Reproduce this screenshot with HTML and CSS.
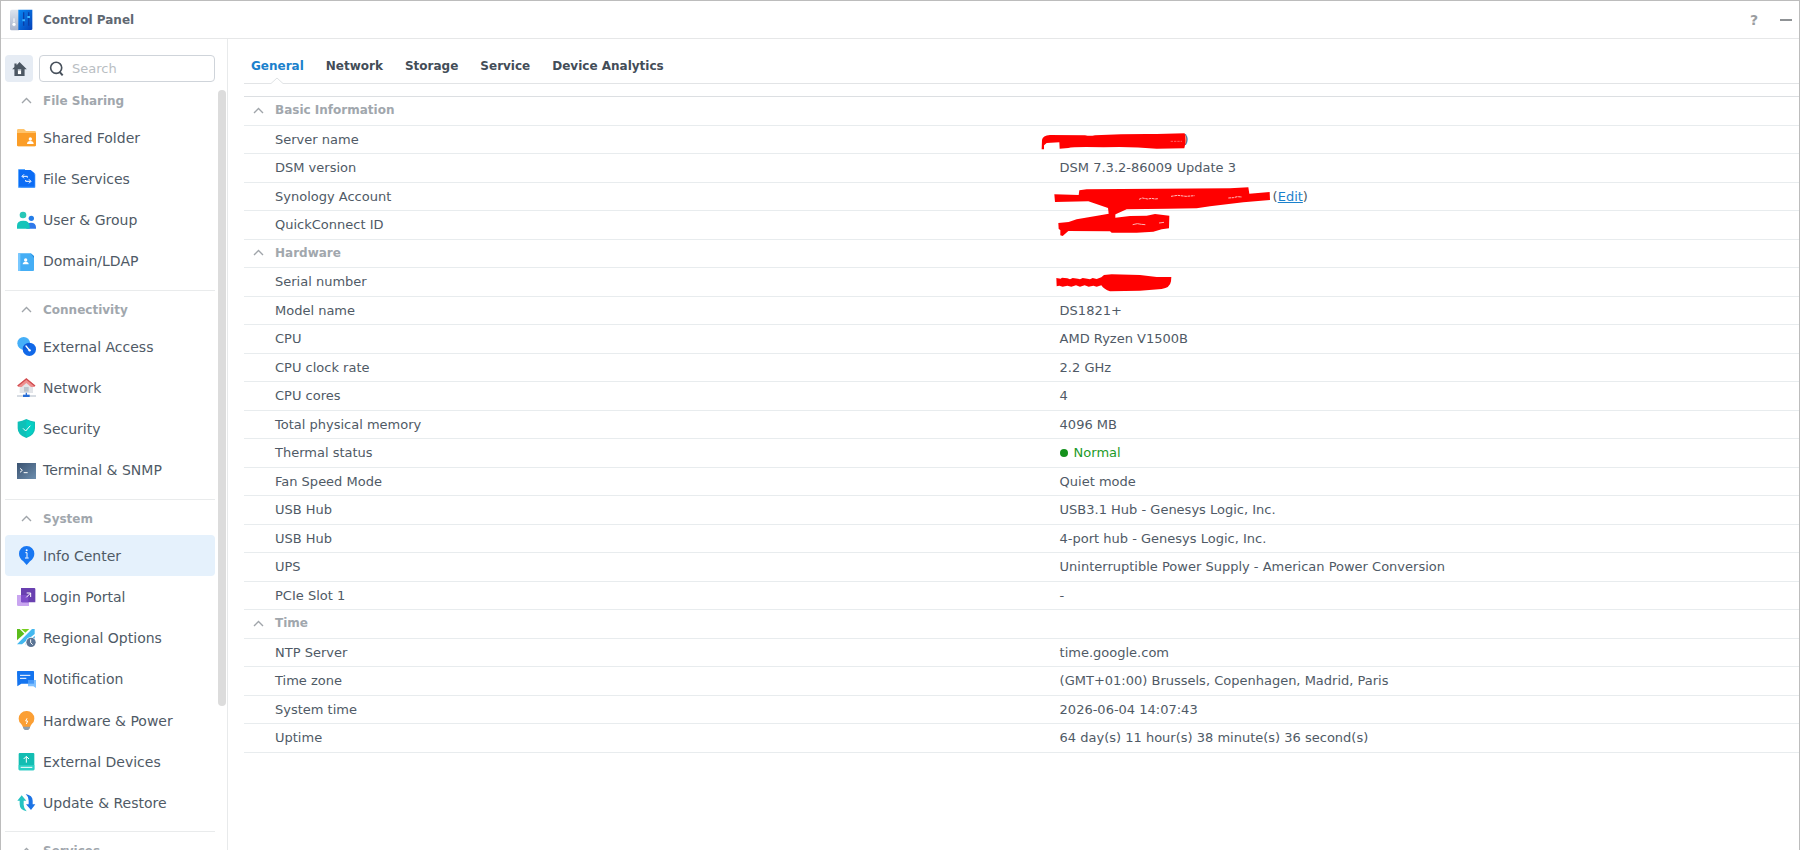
FILE: index.html
```html
<!DOCTYPE html>
<html lang="en">
<head>
<meta charset="utf-8">
<title>Control Panel</title>
<link rel="stylesheet" href="styles.css">
</head>
<body>
<div class="window">
  <header class="titlebar">
    <svg class="app-icon" viewBox="0 0 72 66" aria-hidden="true">
      <defs>
        <linearGradient id="gPanel" x1="0" y1="0" x2="1" y2="1"><stop offset="0" stop-color="#0a8af5"/><stop offset="1" stop-color="#0440b8"/></linearGradient>
        <linearGradient id="gSide" x1="0" y1="0" x2="0" y2="1"><stop offset="0" stop-color="#dde4ee"/><stop offset="1" stop-color="#a9b4cc"/></linearGradient>
      </defs>
      <path d="M8 2h22v62H8q-5 0-5-5V8q0-6 5-6z" fill="url(#gSide)"/>
      <path d="M15 28v14" stroke="#fff" stroke-width="3"/>
      <circle cx="15" cy="46" r="6" fill="#fff" stroke="#b6bfd2" stroke-width="2"/>
      <path d="M28 2h42v58q0 3-4 3H28z" fill="url(#gPanel)"/>
      <path d="M44 10v40M59 10v40" stroke="#0a3fa8" stroke-width="4"/>
      <path d="M40 34h8M55 24h8" stroke="#39b4ff" stroke-width="6"/>
    </svg>
    <h1 class="title">Control Panel</h1>
    <div class="window-tools">
      <button class="tool" type="button" aria-label="Help">?</button>
      <button class="tool" type="button" aria-label="Minimize"><svg class="minus" viewBox="0 0 12 2"><path d="M0 1h12" stroke="#8f9295" stroke-width="2"/></svg></button>
    </div>
  </header>
  <div class="body">
    <aside class="sidebar">
      <div class="search-row">
        <button class="home" type="button" aria-label="Home">
          <svg class="home-icon" viewBox="0 0 46 44"><path d="M23 0L46 23H39V44H7V23H0L7 16V5h7v5z" fill="#4c5763"/><path d="M18 22h10v16H18z" fill="#fff"/><path d="M18 22h10v5H18z" fill="#aab3be"/></svg>
        </button>
        <label class="search">
          <svg class="search-icon" viewBox="0 0 44 46" aria-hidden="true"><circle cx="21" cy="21" r="17" fill="none" stroke="#47505b" stroke-width="5"/><path d="M31 33l10 11" stroke="#47505b" stroke-width="6"/></svg>
          <input class="search-input" type="search" placeholder="Search" aria-label="Search">
        </label>
      </div>
      <div class="nav-area">
        <nav class="nav">
          <section class="group">
            <button class="group-title" type="button"><svg class="chevron" viewBox="0 0 11 7"><path d="M1 6l4.500-4.500L10 6"/></svg>File Sharing</button>
            <a class="item" href="#"><svg class="icon" viewBox="0 0 57 57"><path d="M0 7q0-4 4-4h17l6 6h26q4 0 4 4v38q0 4-4 4H4q-4 0-4-4z" fill="#ffc36a"/><path d="M0 15h57v36q0 4-4 4H4q-4 0-4-4z" fill="#fb9d27"/><circle cx="40" cy="33" r="5" fill="#fff"/><path d="M30 48q0-9 10-9t10 9z" fill="#fff"/></svg>Shared Folder</a>
            <a class="item" href="#"><svg class="icon" viewBox="0 0 57 57"><path d="M3 3q0-3 3-3h18v57H6q-3 0-3-3z" fill="#5aa7ff"/><path d="M9 57h43q3 0 3-3V14" fill="#4c9cff"/><path d="M6 3h35l12 10v40H6z" fill="#0b6cf5"/><path d="M21 16l-6 6 6 6M16 22h15v4M36 31l6 6-6 6M41 37H26v-4" fill="none" stroke="#fff" stroke-width="3"/></svg>File Services</a>
            <a class="item" href="#"><svg class="icon" viewBox="0 0 57 57"><circle cx="18" cy="15" r="10" fill="#27c7b7"/><circle cx="43" cy="25" r="8" fill="#247de8"/><path d="M28 56V48q2-10 14-10 15 0 15 14v4z" fill="#2f78ea"/><path d="M0 56v-9q0-15 19-15t19 17v7z" fill="#16c4ba"/></svg>User &amp; Group</a>
            <a class="item" href="#"><svg class="icon" viewBox="0 0 57 57"><path d="M6 4h36l9 8v42q0 3-3 3H6q-3 0-3-3V7q0-3 3-3z" fill="#45aef5"/><path d="M3 4h7v53H3z" fill="#79c8ff"/><path d="M40 4l11 9v5z" fill="#2388dd"/><circle cx="26" cy="24" r="5" fill="#fff"/><path d="M17 37q0-8 9-8t9 8z" fill="#fff"/></svg>Domain/LDAP</a>
          </section>
          <section class="group">
            <button class="group-title" type="button"><svg class="chevron" viewBox="0 0 11 7"><path d="M1 6l4.500-4.500L10 6"/></svg>Connectivity</button>
            <a class="item" href="#"><svg class="icon" viewBox="0 0 57 57"><circle cx="20" cy="19" r="19" fill="#45aff8"/><circle cx="37" cy="37" r="20" fill="#1168e8"/><path d="M18 37q0-17 20-19 3 11-5 17-6 4-15 2z" fill="#0d5ad6"/><path d="M27 27l10 12" stroke="#fff" stroke-width="4" stroke-linecap="round"/><circle cx="38" cy="40" r="3.500" fill="#fff"/></svg>External Access</a>
            <a class="item" href="#"><svg class="icon" viewBox="0 0 57 57"><path d="M8 22h40v23H8z" fill="#e2e4e8"/><path d="M21 26h14v15H21z" fill="#bcc4cc"/><path d="M28 0l27 23-4 4H5l-4-4z" fill="#ee8f8f"/><path d="M14 27L28 15l14 12z" fill="#e2e4e8"/><path d="M2 24L28 3l26 21" fill="none" stroke="#cf4c50" stroke-width="4"/><path d="M0 54h57" stroke="#aeb9c6" stroke-width="3"/><path d="M28 44v8" stroke="#2f72d8" stroke-width="4"/><path d="M18 50h20v7H18z" fill="#256cd6"/></svg>Network</a>
            <a class="item" href="#"><svg class="icon" viewBox="0 0 57 57"><path d="M28 0Q40 7 54 8v20q0 21-26 29Q2 49 2 28V8Q16 7 28 0z" fill="#0fc0b8"/><path d="M28 4Q39 10 50 11v17q0 18-22 25z" fill="#05cfc4"/><path d="M18 28l8 8 14-16" fill="none" stroke="#fff" stroke-width="3"/></svg>Security</a>
            <a class="item" href="#"><svg class="icon" viewBox="0 0 57 57"><defs><linearGradient id="gTerm" x1="0" y1="0" x2="1" y2="1"><stop offset="0" stop-color="#3a5270"/><stop offset="1" stop-color="#6d8eae"/></linearGradient></defs><path d="M0 6h57v48H0z" fill="url(#gTerm)"/><path d="M9 22l7 6-7 6M20 35h12" fill="none" stroke="#fff" stroke-width="3"/></svg>Terminal &amp; SNMP</a>
          </section>
          <section class="group">
            <button class="group-title" type="button"><svg class="chevron" viewBox="0 0 11 7"><path d="M1 6l4.500-4.500L10 6"/></svg>System</button>
            <a class="item active" href="#" aria-current="page"><svg class="icon" viewBox="0 0 57 57"><path d="M29 0a23 23 0 0 1 23 23Q52 36 39 46L29 57 19 46Q6 36 6 23A23 23 0 0 1 29 0z" fill="#1877f2"/><circle cx="29" cy="13" r="3" fill="#fff"/><path d="M25 20h5v15M24 36h11" fill="none" stroke="#fff" stroke-width="3"/></svg>Info Center</a>
            <a class="item" href="#"><svg class="icon" viewBox="0 0 57 57"><path d="M0 24h36v33H4q-4 0-4-4z" fill="#c9a5f0"/><path d="M12 3h40q3 0 3 3v40H15q-3 0-3-3z" fill="#6940b0"/><path d="M12 24h22v22H15q-3 0-3-3z" fill="#7e4cc9"/><path d="M28 31l12-12M29 18h12v12" fill="none" stroke="#fff" stroke-width="3"/></svg>Login Portal</a>
            <a class="item" href="#"><svg class="icon" viewBox="0 0 57 57"><path d="M0 3h53v46H0z" fill="#fff"/><path d="M0 3h8l14 14L0 37z" fill="#5cbd1c"/><path d="M13 3h24L25 14z" fill="#76cf20"/><path d="M45 3h8v15L15 49H0z" fill="#43b8ef"/><path d="M53 24v25H24z" fill="#2aa0dd"/><circle cx="42" cy="43" r="16" fill="#fff"/><circle cx="42" cy="43" r="14" fill="#5b7494"/><path d="M41 34v10l6 6" fill="none" stroke="#fff" stroke-width="3"/></svg>Regional Options</a>
            <a class="item" href="#"><svg class="icon" viewBox="0 0 57 57"><path d="M2 3h47q2 0 2 2v36H13L1 49 0 5q0-2 2-2z" fill="#1474ef"/><path d="M33 30h24v24l-8-5H33z" fill="#7fc0ff"/><path d="M33 30h18v11H33z" fill="#4698f8"/><path d="M9 16h31M9 25h19" stroke="#fff" stroke-width="3"/></svg>Notification</a>
            <a class="item" href="#"><svg class="icon" viewBox="0 0 57 57"><path d="M18 42h21v9l-5 6H23l-5-6z" fill="#8f9eac"/><path d="M28 0a23 23 0 0 1 24 23q0 9-7 15-4 4-5 9H17q-1-5-5-9-7-6-7-15A23 23 0 0 1 28 0z" fill="#fb9f34"/><path d="M30 22l-4 8h6l-4 9" fill="none" stroke="#fff" stroke-width="3"/></svg>Hardware &amp; Power</a>
            <a class="item" href="#"><svg class="icon" viewBox="0 0 57 57"><path d="M8 3h41q3 0 3 3v46q0 3-3 3H8q-3 0-3-3V6q0-3 3-3z" fill="#13bdb2"/><path d="M5 39h47v13q0 3-3 3H8q-3 0-3-3z" fill="#29d0c5"/><path d="M28 32V14M20 21l8-8 8 8M11 46h35" fill="none" stroke="#fff" stroke-width="3"/></svg>External Devices</a>
            <a class="item" href="#"><svg class="icon" viewBox="0 0 57 57"><path d="M14 7L28 23H20v12q0 11 9 20Q8 51 8 34V23H1z" fill="#25c3c2"/><path d="M42 51L27 34h8V23q0-12-9-20 21 4 21 20v11h8z" fill="#1c73e5"/></svg>Update &amp; Restore</a>
          </section>
          <section class="group">
            <button class="group-title" type="button"><svg class="chevron" viewBox="0 0 11 7"><path d="M1 6l4.500-4.500L10 6"/></svg>Services</button>
          </section>
        </nav>
        <div class="scroll-track"><div class="scroll-thumb"></div></div>
      </div>
    </aside>
    <main class="content">
      <nav class="tabs">
        <a class="tab current" href="#" aria-current="page">General<svg class="notch" viewBox="0 0 12 7"><path d="M0 6L6 1l6 5v1H0z" fill="#fff"/><path d="M0 6.500L6 1l6 5.500" fill="none" stroke="#dfe2e4"/></svg></a>
        <a class="tab" href="#">Network</a>
        <a class="tab" href="#">Storage</a>
        <a class="tab" href="#">Service</a>
        <a class="tab" href="#">Device Analytics</a>
      </nav>
      <table class="info">
        <colgroup><col class="col-label"><col></colgroup>
        <tbody>
          <tr class="section-row"><th colspan="2" scope="colgroup"><button class="section-title" type="button"><svg class="chevron" viewBox="0 0 11 7"><path d="M1 6l4.500-4.500L10 6"/></svg>Basic Information</button></th></tr>
          <tr><th scope="row">Server name</th><td><span class="hidden-name"></span>)<svg class="mark" viewBox="30 18 900 180"><path d="M35 88L36 60Q38 46 60 45L165 46Q180 49 195 46 290 41 380 42L464 40Q470 62 463 85L380 86Q300 79 220 82 130 80 115 84L89 86 88 67 50 69 42 76 42 88z" fill="#f00"/><path d="M422 64h34" stroke="#ff8f8f" stroke-width="2" stroke-dasharray="7 3"/></svg></td></tr>
          <tr><th scope="row">DSM version</th><td>DSM 7.3.2-86009 Update 3</td></tr>
          <tr><th scope="row">Synology Account</th><td><span class="hidden-account"></span>(<a class="link" href="#">Edit</a>)<svg class="mark" viewBox="30 189 900 180"><path d="M73 223L146 225 148 211 170 208 380 206 600 205 655 202 658 221 719 216 720 240 640 247 540 259 500 265 410 266 290 268 250 286 236 280 234 264 175 244 75 246z" fill="#f00"/><path d="M327 238l10-4 16 3 12-2 10 2 10-1M423 229l20-3 25 3 26-2M595 234l15-1 12-3 14 1" stroke="#ffc1c1" stroke-width="3" stroke-dasharray="8 2" fill="none"/></svg></td></tr>
          <tr><th scope="row">QuickConnect ID</th><td><svg class="mark" viewBox="30 273 900 180"><path d="M85 309L116 306 140 298 215 285 236 281 238 270 256 275 256 293 300 288 350 287 375 282 418 287 417 325 395 328 370 335 320 338 245 338 240 334 115 333 98 348 91 346 91 330 86 327z" fill="#f00"/><path d="M308 314l14-3 12 2 12 1M387 309l15-2" stroke="#ffb0b0" stroke-width="3" fill="none"/></svg></td></tr>
          <tr class="section-row"><th colspan="2" scope="colgroup"><button class="section-title" type="button"><svg class="chevron" viewBox="0 0 11 7"><path d="M1 6l4.500-4.500L10 6"/></svg>Hardware</button></th></tr>
          <tr><th scope="row">Serial number</th><td><svg class="mark" viewBox="30 444 900 180"><path d="M79 474L92 476 96 473 112 475 120 478 128 474 144 476 150 478 158 474 172 476 180 478 188 474 200 477 214 472 222 465 245 463 330 465 380 471 424 471 423 484Q420 504 395 507L330 512 240 514Q222 508 214 496L200 500 190 497 176 500 164 496 150 500 138 496 124 500 112 497 98 500 88 497 80 499z" fill="#f00"/></svg></td></tr>
          <tr><th scope="row">Model name</th><td>DS1821+</td></tr>
          <tr><th scope="row">CPU</th><td>AMD Ryzen V1500B</td></tr>
          <tr><th scope="row">CPU clock rate</th><td>2.2 GHz</td></tr>
          <tr><th scope="row">CPU cores</th><td>4</td></tr>
          <tr><th scope="row">Total physical memory</th><td>4096 MB</td></tr>
          <tr><th scope="row">Thermal status</th><td><span class="status"><span class="dot"></span>Normal</span></td></tr>
          <tr><th scope="row">Fan Speed Mode</th><td>Quiet mode</td></tr>
          <tr><th scope="row">USB Hub</th><td>USB3.1 Hub - Genesys Logic, Inc.</td></tr>
          <tr><th scope="row">USB Hub</th><td>4-port hub - Genesys Logic, Inc.</td></tr>
          <tr><th scope="row">UPS</th><td>Uninterruptible Power Supply - American Power Conversion</td></tr>
          <tr><th scope="row">PCIe Slot 1</th><td>-</td></tr>
          <tr class="section-row"><th colspan="2" scope="colgroup"><button class="section-title" type="button"><svg class="chevron" viewBox="0 0 11 7"><path d="M1 6l4.500-4.500L10 6"/></svg>Time</button></th></tr>
          <tr><th scope="row">NTP Server</th><td>time.google.com</td></tr>
          <tr><th scope="row">Time zone</th><td>(GMT+01:00) Brussels, Copenhagen, Madrid, Paris</td></tr>
          <tr><th scope="row">System time</th><td>2026-06-04 14:07:43</td></tr>
          <tr><th scope="row">Uptime</th><td>64 day(s) 11 hour(s) 38 minute(s) 36 second(s)</td></tr>
        </tbody>
      </table>
    </main>
  </div>
</div>
</body>
</html>
```

FILE: styles.css
```css
* {
  box-sizing: border-box;
}

body {
  margin: 0;
  background: #fff;
  color: #4f5a66;
  font-family: Verdana, "DejaVu Sans", sans-serif;
  font-size: 13px;
}

button {
  margin: 0;
  padding: 0;
  border: 0;
  background: none;
  font: inherit;
  color: inherit;
  cursor: pointer;
}

a {
  color: inherit;
  text-decoration: none;
}

.window {
  display: flex;
  flex-direction: column;
  height: 100vh;
  border: 1px solid #bcbcbc;
  border-bottom: 0;
  overflow: hidden;
}

.titlebar {
  display: flex;
  align-items: center;
  flex: none;
  height: 38px;
  padding: 0 1px 0 8px;
  border-bottom: 1px solid #e6e7e8;
}

.app-icon {
  width: 24px;
  height: 22px;
}

.title {
  margin: 0 0 0 10px;
  font-size: 12px;
  line-height: 16px;
  color: #5f6872;
}

.window-tools {
  display: flex;
  align-items: center;
  gap: 8px;
  margin-left: auto;
}

.tool {
  display: flex;
  align-items: center;
  justify-content: center;
  width: 24px;
  height: 24px;
  font-size: 14px;
  font-weight: bold;
  color: #9a9da0;
}

.minus {
  width: 12px;
  height: 2px;
}

.body {
  display: flex;
  flex: 1;
  min-height: 0;
}

.sidebar {
  display: flex;
  flex-direction: column;
  flex: none;
  width: 227px;
  border-right: 1px solid #e8eaeb;
}

.search-row {
  display: flex;
  gap: 6px;
  padding: 16px 12px 0 4px;
}

.home {
  display: flex;
  align-items: center;
  justify-content: center;
  flex: none;
  width: 28px;
  height: 27px;
  border-radius: 4px;
  background: #e6ecf4;
}

.home-icon {
  width: 15px;
  height: 14px;
}

.search {
  display: flex;
  align-items: center;
  flex: 1;
  gap: 6px;
  min-width: 0;
  height: 27px;
  padding: 0 9px;
  border: 1px solid #cfd4da;
  border-radius: 4px;
}

.search-icon {
  flex: none;
  width: 15px;
  height: 15px;
}

.search-input {
  flex: 1;
  min-width: 0;
  padding: 0 2px;
  border: 0;
  outline: 0;
  background: none;
  font: inherit;
  color: inherit;
}

.search-input::placeholder {
  color: #b9bec3;
}

.nav-area {
  display: flex;
  flex: 1;
  min-height: 0;
}

.nav {
  flex: 1;
  padding: 0 3px 0 4px;
  overflow: hidden;
}

.group {
  padding-bottom: 8px;
}

.group + .group {
  border-top: 1px solid #e9ebec;
}

.group-title {
  display: flex;
  align-items: center;
  width: 100%;
  height: 35px;
  padding: 2px 0 0 16px;
  font-size: 12px;
  font-weight: bold;
  color: #a1a7ad;
}

.chevron {
  flex: none;
  width: 11px;
  height: 7px;
  margin-right: 11px;
  fill: none;
  stroke: #a0a5aa;
  stroke-width: 1.4;
}

.item {
  display: flex;
  align-items: center;
  gap: 7px;
  height: 41px;
  padding-left: 12px;
  border-radius: 4px;
  font-size: 14px;
}

.item:nth-of-type(4n) {
  height: 42px;
}

.item.active {
  background: #e5f1fc;
}

.icon {
  flex: none;
  width: 19px;
  height: 19px;
}

.scroll-track {
  width: 9px;
  padding: 8px 1px 0 0;
}

.scroll-thumb {
  height: 81%;
  border-radius: 4px;
  background: #dcdcdc;
}

.content {
  flex: 1;
  min-width: 0;
  padding-left: 16px;
}

.tabs {
  display: flex;
  gap: 22px;
  height: 45px;
  margin-bottom: 12px;
  padding-left: 7px;
  border-bottom: 1px solid #e2e4e6;
  color: #434d58;
  font-size: 12px;
  font-weight: bold;
  line-height: 16px;
}

.tab {
  position: relative;
  padding-top: 19px;
}

.tab.current {
  color: #1b81cc;
}

.notch {
  position: absolute;
  left: 50%;
  bottom: -1px;
  width: 12px;
  height: 7px;
  margin-left: -6px;
}

.info {
  width: 100%;
  table-layout: fixed;
  border-collapse: separate;
  border-spacing: 0;
  border-top: 1px solid #dcdfe2;
}

.col-label {
  width: 52%;
}

.info tr {
  height: 28px;
}

.info tr:nth-child(odd) {
  height: 29px;
}

.info th,
.info td {
  position: relative;
  padding: 0 0 0 7px;
  border-bottom: 1px solid #e8ecee;
  line-height: 16px;
  font-weight: normal;
  text-align: left;
  vertical-align: middle;
  white-space: nowrap;
}

.info th {
  padding-left: 31px;
}

.info .section-row th {
  padding: 0 0 2px 9px;
}

.section-title {
  display: flex;
  align-items: center;
  font-size: 12px;
  font-weight: bold;
  color: #a1a7ad;
}

.hidden-name {
  display: inline-block;
  width: 124px;
}

.hidden-account {
  display: inline-block;
  width: 213px;
}

.mark {
  position: absolute;
  top: 0;
  left: -13px;
  z-index: 1;
  width: 300px;
  height: 60px;
  overflow: visible;
  pointer-events: none;
}

.link {
  color: #1b81cc;
  text-decoration: underline;
}

.status {
  display: flex;
  align-items: center;
  gap: 6px;
  color: #1d9a28;
}

.dot {
  width: 8px;
  height: 8px;
  border-radius: 50%;
  background: #14911c;
}
```
